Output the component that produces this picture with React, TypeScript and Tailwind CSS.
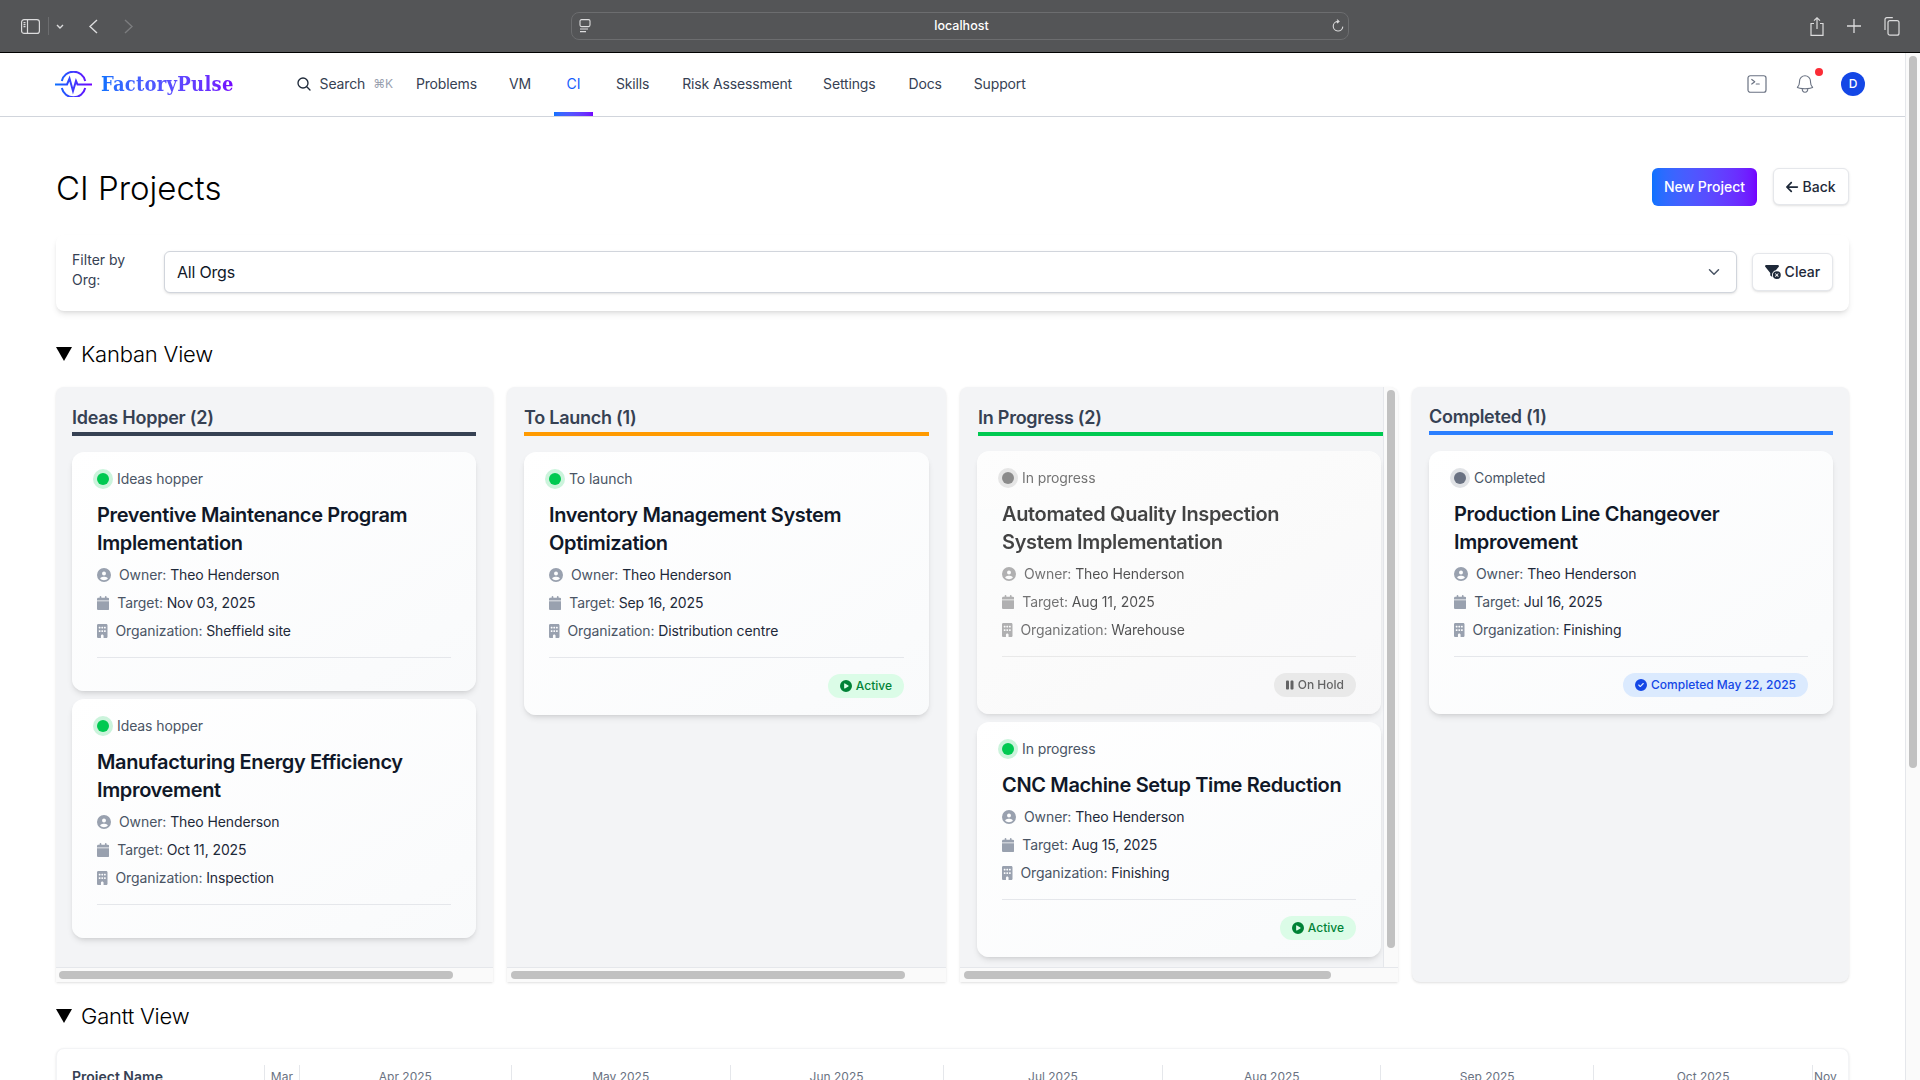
import { ReactNode } from 'react'
import {
  FaArrowLeft,
  FaBuilding,
  FaCalendar,
  FaCircleCheck,
  FaCirclePlay,
  FaCircleUser,
  FaFilterCircleXmark,
  FaPause,
} from 'react-icons/fa6'
import { HiOutlineBell, HiOutlineCommandLine, HiOutlineMagnifyingGlass } from 'react-icons/hi2'
import { LuChevronDown } from 'react-icons/lu'

interface Project {
  stage: string
  title: string
  target: string
  org: string
  dot: 'green' | 'gray'
  footer?: ReactNode
  muted?: boolean
}

const ActiveBadge = () => (
  <span className="inline-flex h-6 items-center gap-1 rounded-full bg-green-100 px-3 text-xs font-medium text-green-700">
    <FaCirclePlay className="h-3 w-3" />
    Active
  </span>
)

const HoldBadge = () => (
  <span className="inline-flex h-6 items-center gap-1 rounded-full bg-gray-200 px-3 text-xs font-medium text-gray-700">
    <FaPause className="h-3 w-[7.5px]" />
    On Hold
  </span>
)

const DoneBadge = () => (
  <span className="inline-flex h-6 items-center gap-1 rounded-full bg-blue-100 px-3 text-xs font-medium text-blue-700">
    <FaCircleCheck className="h-3 w-3" />
    Completed May 22, 2025
  </span>
)

function ProjectCard({
  project,
  className,
  width = 'w-[404px]',
}: {
  project: Project
  className?: string
  width?: string
}) {
  return (
    <div
      className={`rounded-xl bg-gradient-to-br from-white to-gray-50 px-[25px] pt-[17px] pb-[17px] shadow-md ${width} ${project.muted ? 'opacity-80 grayscale' : ''} ${className ?? ''}`}
    >
      <div className="mb-[12px] flex h-5 items-center gap-2 text-sm tracking-[-0.1px] text-gray-600">
        <span
          className={`h-3 w-3 rounded-full ring-4 ${project.dot === 'green' ? 'bg-green-500 ring-green-500/20' : 'bg-gray-500 ring-gray-500/20'}`}
        />
        {project.stage}
      </div>
      <h3 className="mb-2 max-w-[345px] text-xl leading-7 font-semibold tracking-[-0.35px] text-gray-900">
        {project.title}
      </h3>
      <div className="mb-2 flex h-5 items-center text-sm tracking-[-0.1px] text-gray-600">
        <FaCircleUser className="mr-2 h-3.5 w-3.5 text-gray-400" />
        Owner:&nbsp;<span className="text-gray-800">Theo Henderson</span>
      </div>
      <div className="mb-2 flex h-5 items-center text-sm tracking-[-0.1px] text-gray-600">
        <FaCalendar className="mr-2 h-3.5 w-[12.25px] text-gray-400" />
        Target:&nbsp;<span className="text-gray-800">{project.target}</span>
      </div>
      <div className="flex h-5 items-center text-sm tracking-[-0.1px] text-gray-600">
        <FaBuilding className="mr-2 h-3.5 w-[10.5px] text-gray-400" />
        Organization:&nbsp;<span className="text-gray-800">{project.org}</span>
      </div>
      <div className="mt-4 flex justify-end border-t border-gray-200 pt-4">{project.footer}</div>
    </div>
  )
}

function HorizontalBar({ thumb }: { thumb: string }) {
  return (
    <div className="flex h-[15px] shrink-0 items-center border-t border-gray-200 bg-[#fafafa]">
      <div className={`h-2 rounded-full bg-[#c1c1c1] ${thumb}`} />
    </div>
  )
}

function ColumnHeading({ label, line }: { label: string; line: string }) {
  return (
    <h2 className={`mb-4 border-b-4 text-lg leading-7 font-semibold tracking-[-0.25px] text-gray-700 ${line}`}>
      {label}
    </h2>
  )
}

const ideas: Project[] = [
  {
    stage: 'Ideas hopper',
    title: 'Preventive Maintenance Program Implementation',
    target: 'Nov 03, 2025',
    org: 'Sheffield site',
    dot: 'green',
  },
  {
    stage: 'Ideas hopper',
    title: 'Manufacturing Energy Efficiency Improvement',
    target: 'Oct 11, 2025',
    org: 'Inspection',
    dot: 'green',
  },
]

const months = [
  { label: 'Mar', width: 'w-[35px] text-center' },
  { label: 'Apr 2025', width: 'w-[212px] text-center' },
  { label: 'May 2025', width: 'w-[219px] text-center' },
  { label: 'Jun 2025', width: 'w-[213px] text-center' },
  { label: 'Jul 2025', width: 'w-[220px] text-center' },
  { label: 'Aug 2025', width: 'w-[218px] text-center' },
  { label: 'Sep 2025', width: 'w-[213px] text-center' },
  { label: 'Oct 2025', width: 'w-[219px] text-center' },
  { label: 'Nov', width: 'w-[36px] pl-px text-left' },
]

function BrowserBar() {
  return (
    <div className="flex h-[53px] shrink-0 items-center border-b border-black bg-[#545557] text-[#dcdcdd]">
      <svg viewBox="0 0 19 15" className="ml-[21px] h-[15px] w-[19px]" fill="none" stroke="currentColor" strokeWidth="1.2">
        <rect x="0.6" y="0.6" width="17.8" height="13.8" rx="2.5" />
        <path d="M6.5 0.6v13.8M2.5 3.6h2M2.5 5.6h2M2.5 7.6h2" />
      </svg>
      <div className="ml-2 h-[18px] w-px bg-[#6c6d6f]" />
      <svg viewBox="0 0 8 5" className="ml-[7px] h-[5px] w-2" fill="none" stroke="currentColor" strokeWidth="1.4">
        <path d="M1 1l3 3 3-3" />
      </svg>
      <svg viewBox="0 0 10 15" className="ml-[24px] h-[15px] w-2.5" fill="none" stroke="currentColor" strokeWidth="1.4">
        <path d="M9 1L2 7.5 9 14" />
      </svg>
      <svg viewBox="0 0 10 15" className="ml-[26px] h-[15px] w-2.5 text-[#7c7d7f]" fill="none" stroke="currentColor" strokeWidth="1.4">
        <path d="M1 1l7 6.5L1 14" />
      </svg>
      <div className="ml-[437px] flex h-7 w-[778px] items-center justify-between rounded-lg border border-[#6c6d6f] bg-[#545557] pr-1 pl-[7px]">
        <svg viewBox="0 0 12 14" className="h-3.5 w-3" fill="none" stroke="currentColor" strokeWidth="1.1">
          <rect x="1" y="0.6" width="10" height="7" rx="1.5" />
          <path d="M1 10h8M1 12.6h6" />
        </svg>
        <span className="text-[12.5px] font-medium text-white">localhost</span>
        <svg viewBox="0 0 12 14" className="h-3.5 w-3" fill="none" stroke="currentColor" strokeWidth="1.1">
          <path d="M6 2.4a4.8 4.8 0 1 0 4.8 5.2M5 0.6l2 1.8-2 1.8" />
        </svg>
      </div>
      <svg viewBox="0 0 14 19" className="ml-[461px] h-[19px] w-3.5" fill="none" stroke="currentColor" strokeWidth="1.2">
        <path d="M4 6.5H1v11.8h12V6.5h-3M7 12V1M4 3.6L7 .8l3 2.8" />
      </svg>
      <svg viewBox="0 0 14 14" className="ml-[23px] h-3.5 w-3.5" fill="none" stroke="currentColor" strokeWidth="1.3">
        <path d="M7 0v14M0 7h14" />
      </svg>
      <svg viewBox="0 0 17 19" className="ml-[22px] h-[19px] w-[17px]" fill="none" stroke="currentColor" strokeWidth="1.2">
        <path d="M2 13V2.5A1.8 1.8 0 0 1 3.8.7h6" />
        <rect x="5" y="3.6" width="11" height="14.6" rx="2" />
      </svg>
    </div>
  )
}

function Logo() {
  return (
    <div className="flex items-center">
      <svg viewBox="0 0 37 26" className="h-[26px] w-[37px]" fill="none" strokeWidth="2">
        <defs>
          <linearGradient id="pulse" gradientUnits="userSpaceOnUse" x1="0" y1="0" x2="37" y2="0">
            <stop offset="0" stopColor="#0a72ff" />
            <stop offset="1" stopColor="#7300ff" />
          </linearGradient>
        </defs>
        <path d="M6.8 10A12 12 0 0 1 30.2 10" stroke="url(#pulse)" />
        <path d="M6.8 17A12 12 0 0 0 30.2 17" stroke="url(#pulse)" />
        <path d="M0 13.5h12l2.5-6 3.5 12.5 3-10 1.5 3.5H37" stroke="url(#pulse)" />
      </svg>
      <span className="ml-[9px] bg-gradient-to-r from-[#0a72ff] to-[#7300ff] bg-clip-text text-[20px] leading-7 font-bold tracking-[0.25px] text-transparent [font-family:'DejaVu_Serif_Condensed','DejaVu_Serif',serif]">
        FactoryPulse
      </span>
    </div>
  )
}

function NavBar() {
  return (
    <header className="flex h-16 shrink-0 items-center border-b border-gray-300 bg-white pb-[2px] pl-[55px] text-sm tracking-[-0.15px] text-gray-700">
      <Logo />
      <div className="ml-[62px] flex items-center">
        <HiOutlineMagnifyingGlass size={16} strokeWidth={2} className="text-gray-800" />
        <span className="ml-2">Search</span>
        <span className="ml-2 text-xs text-gray-400">⌘K</span>
      </div>
      <span className="ml-[23px]">Problems</span>
      <span className="ml-[32px]">VM</span>
      <span className="relative ml-[23px] flex h-full w-[39px] items-center justify-center text-blue-600">
        CI
        <span className="absolute inset-x-0 -bottom-[2px] h-1 bg-gradient-to-r from-[#0a72ff] to-[#7300ff]" />
      </span>
      <span className="ml-[23px]">Skills</span>
      <span className="ml-[33px]">Risk Assessment</span>
      <span className="ml-[31px]">Settings</span>
      <span className="ml-[33px]">Docs</span>
      <span className="ml-8">Support</span>
      <div className="mr-[40px] ml-auto flex items-center">
        <HiOutlineCommandLine size={24} strokeWidth={1.2} className="text-gray-500" />
        <div className="relative ml-[25px]">
          <HiOutlineBell size={22} strokeWidth={1.2} className="text-gray-500" />
          <span className="absolute -top-[5px] -right-[7px] h-2 w-2 rounded-full bg-red-500" />
        </div>
        <div className="ml-[25px] flex h-6 w-6 items-center justify-center rounded-full bg-blue-700 text-xs font-medium text-white">
          D
        </div>
      </div>
    </header>
  )
}

function SectionTitle({ label }: { label: string }) {
  return (
    <div className="flex h-8 items-center">
      <svg viewBox="0 0 16 14" className="h-3.5 w-4 fill-black">
        <polygon points="0,0 16,0 8,14" />
      </svg>
      <span className="ml-[9px] text-[22px] font-light tracking-[-0.2px] text-black">{label}</span>
    </div>
  )
}

export default function App() {
  return (
    <div className="flex h-screen flex-col overflow-hidden bg-white [font-family:Inter,sans-serif]">
      <BrowserBar />
      <div className="flex min-h-0 flex-1">
        <div className="min-w-0 flex-1 overflow-hidden">
          <NavBar />
          <main className="px-14">
            {/* Title row */}
            <div className="flex items-start justify-between pt-[51px]">
              <h1 className="text-[33px] leading-10 font-light text-black">CI Projects</h1>
              <div className="flex gap-4">
                <button className="h-[38px] w-[105px] rounded-md bg-gradient-to-r from-[#0a72ff] to-[#7300ff] text-sm font-medium text-white">
                  New Project
                </button>
                <button className="flex h-[37px] w-[76px] items-center justify-center gap-1 rounded-md border border-gray-200 bg-white text-sm font-medium text-gray-800 shadow-sm">
                  <FaArrowLeft className="h-3.5 w-[12.25px]" />
                  Back
                </button>
              </div>
            </div>

            {/* Filter */}
            <div className="mt-[27px] flex h-[76px] items-center rounded-lg bg-white pr-4 pb-[2px] pl-4 shadow-md">
              <label className="w-[76px] pb-1 text-sm leading-5 text-gray-700">
                Filter by
                <br />
                Org:
              </label>
              <div className="ml-4 flex h-[42px] flex-1 items-center justify-between rounded-md border border-gray-300 bg-white pr-[13px] pl-3 text-base tracking-[-0.2px] text-gray-900 shadow-sm">
                All Orgs
                <LuChevronDown size={18} className="text-gray-600" />
              </div>
              <button className="ml-[15px] flex h-[38px] w-[81px] items-center justify-center gap-1 rounded-md border border-gray-200 bg-white text-sm font-medium text-gray-800 shadow-sm">
                <FaFilterCircleXmark className="h-3.5 w-[15.75px]" />
                Clear
              </button>
            </div>

            {/* Kanban */}
            <div className="mt-[27px]">
              <SectionTitle label="Kanban View" />
            </div>
            <div className="mt-[17px] grid h-[595px] grid-cols-[437px_439px_438px_437px] gap-3.5">
              <div className="flex flex-col overflow-hidden rounded-t-lg bg-gray-100 shadow-sm">
                <div className="min-h-0 w-[420px] flex-1 pt-[17px] pl-4">
                  <ColumnHeading label="Ideas Hopper (2)" line="border-gray-700" />
                  <ProjectCard project={ideas[0]} className="mb-2" />
                  <ProjectCard project={ideas[1]} />
                </div>
                <HorizontalBar thumb="ml-[3px] w-[394px]" />
              </div>

              <div className="flex flex-col overflow-hidden rounded-t-lg bg-gray-100 shadow-sm">
                <div className="min-h-0 w-[422px] flex-1 pt-[17px] pl-[17px]">
                  <ColumnHeading label="To Launch (1)" line="border-[#ff9a00]" />
                  <ProjectCard
                    width="w-[405px]"
                    project={{
                      stage: 'To launch',
                      title: 'Inventory Management System Optimization',
                      target: 'Sep 16, 2025',
                      org: 'Distribution centre',
                      dot: 'green',
                      footer: <ActiveBadge />,
                    }}
                  />
                </div>
                <HorizontalBar thumb="ml-1 w-[394px]" />
              </div>

              <div className="flex flex-col overflow-hidden rounded-t-lg bg-gray-100 shadow-sm">
                <div className="flex min-h-0 flex-1">
                  <div className="min-w-0 flex-1 pt-[17px] pl-[18px]">
                    <ColumnHeading label="In Progress (2)" line="border-green-500" />
                    <ProjectCard
                      className="mb-2 -mt-px -ml-px"
                      project={{
                        stage: 'In progress',
                        title: 'Automated Quality Inspection System Implementation',
                        target: 'Aug 11, 2025',
                        org: 'Warehouse',
                        dot: 'gray',
                        muted: true,
                        footer: <HoldBadge />,
                      }}
                    />
                    <ProjectCard
                      className="-ml-px"
                      project={{
                        stage: 'In progress',
                        title: 'CNC Machine Setup Time Reduction',
                        target: 'Aug 15, 2025',
                        org: 'Finishing',
                        dot: 'green',
                        footer: <ActiveBadge />,
                      }}
                    />
                  </div>
                  <div className="w-[15px] shrink-0 border-l border-gray-200 bg-[#fafafa] pt-[3px] pl-[3px]">
                    <div className="h-[558px] w-2 rounded-full bg-[#c1c1c1]" />
                  </div>
                </div>
                <HorizontalBar thumb="ml-1 w-[367px]" />
              </div>

              <div className="overflow-hidden rounded-lg bg-gray-100 pt-4 pl-[17px] shadow-sm">
                <div className="w-[404px]">
                  <ColumnHeading label="Completed (1)" line="border-blue-500" />
                </div>
                <ProjectCard
                  project={{
                    stage: 'Completed',
                    title: 'Production Line Changeover Improvement',
                    target: 'Jul 16, 2025',
                    org: 'Finishing',
                    dot: 'gray',
                    footer: <DoneBadge />,
                  }}
                />
              </div>
            </div>

            {/* Gantt */}
            <div className="mt-[18px]">
              <SectionTitle label="Gantt View" />
            </div>
            <div className="mt-4 h-[100px] rounded-lg border border-gray-100 bg-white pt-4 pl-[15px] shadow-sm">
              <div className="flex">
                <div className="w-[192px] text-sm leading-6 font-semibold text-gray-700">Project Name</div>
                {months.map((m) => (
                  <div key={m.label} className={`border-l border-gray-200 text-xs leading-6 text-gray-500 ${m.width}`}>
                    {m.label}
                  </div>
                ))}
              </div>
            </div>
          </main>
        </div>

        {/* Page scrollbar */}
        <div className="w-[15px] shrink-0 border-l border-gray-200 bg-[#fafafa] pt-[3px] pl-[3px]">
          <div className="h-[712px] w-2 rounded-full bg-[#c1c1c1]" />
        </div>
      </div>
    </div>
  )
}
